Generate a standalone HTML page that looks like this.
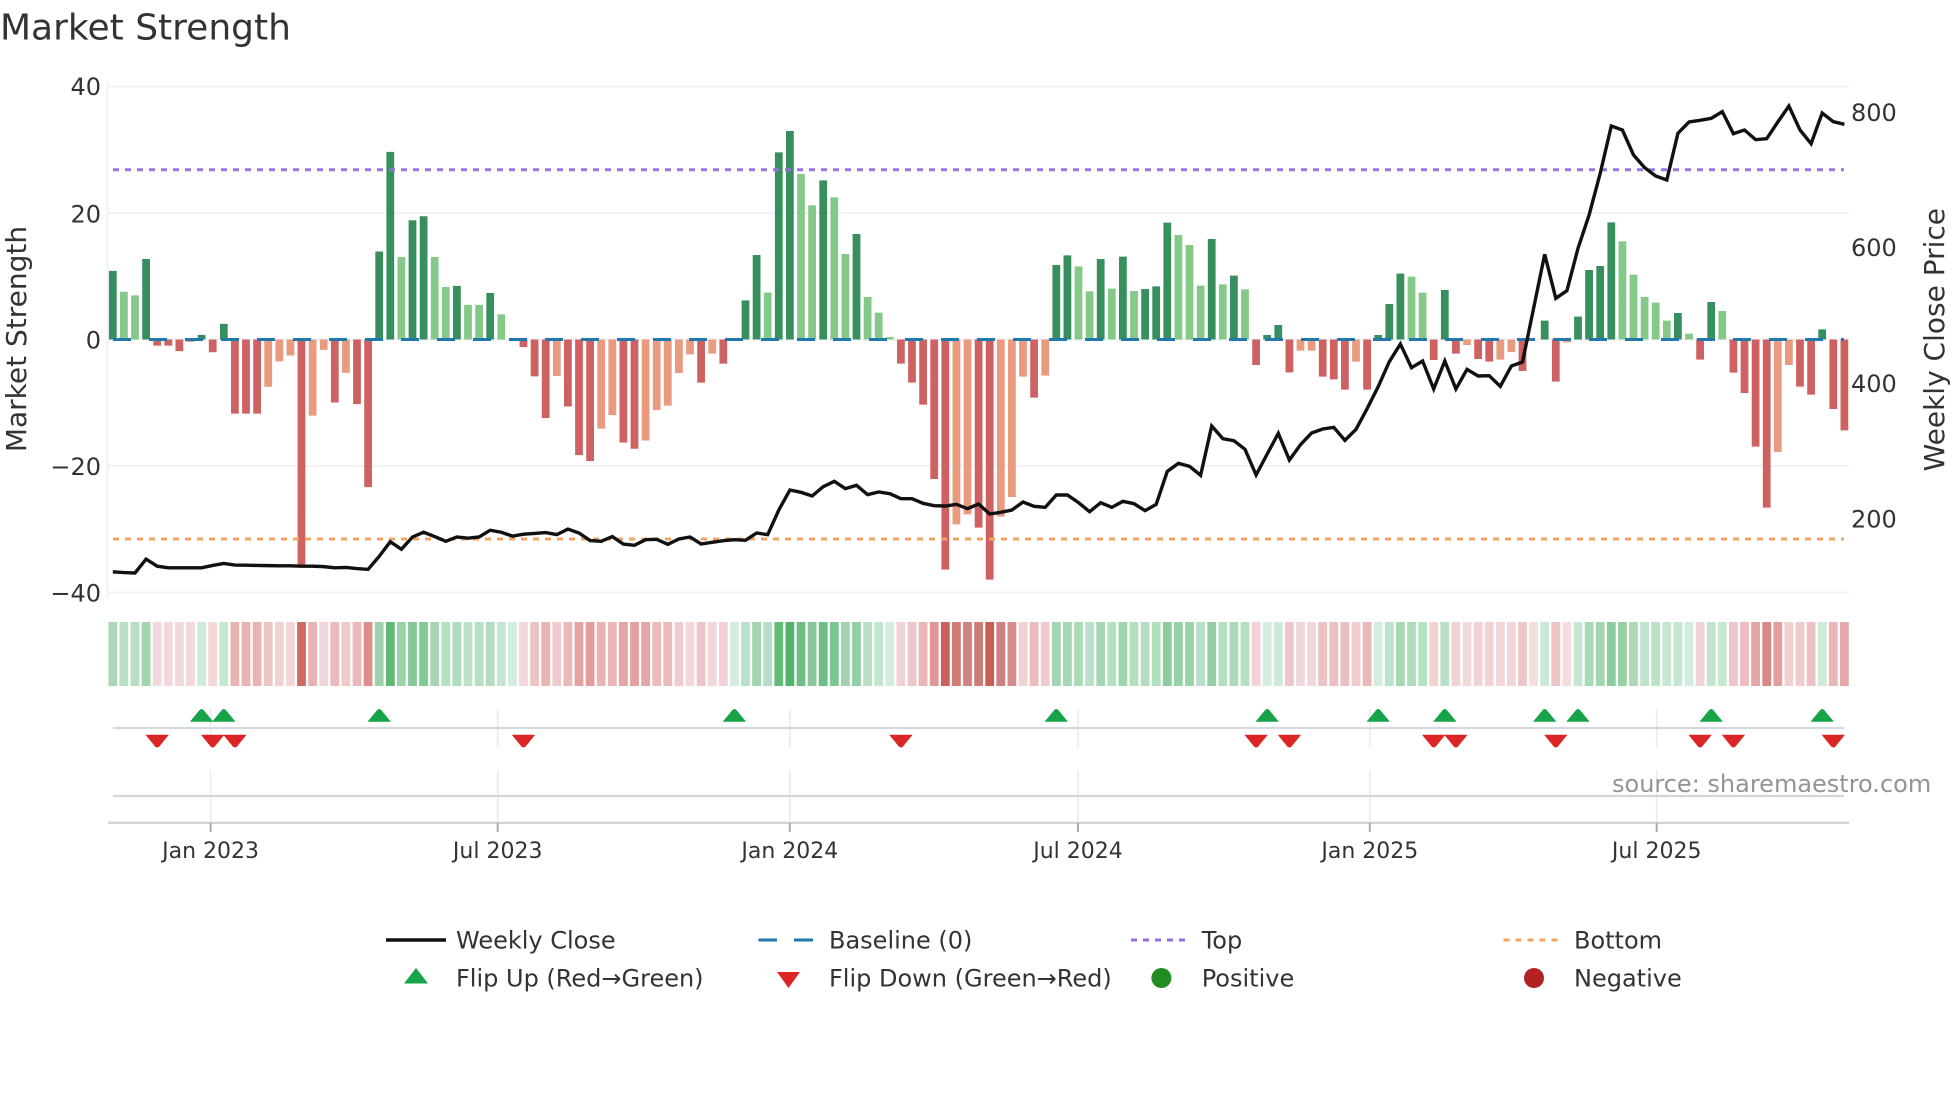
<!DOCTYPE html>
<html lang="en">
<head>
<meta charset="utf-8">
<title>Market Strength</title>
<style>
html,body{margin:0;padding:0;background:#fff;width:1960px;height:1102px;overflow:hidden}
svg{display:block;position:absolute;left:0;top:0}
text{font-family:"DejaVu Sans","Liberation Sans",sans-serif;fill:#333}
</style>
</head>
<body>
<svg width="1960" height="1102" viewBox="0 0 1960 1102" xmlns="http://www.w3.org/2000/svg">
<defs>
<path id="u" d="M-11.7 721.7L-2 710Q0 708 2 710L11.7 721.7Z" fill="#16a34a"/>
<path id="d" d="M-11.7 734.7H11.7L2 746.6Q0 748.4 -2 746.6Z" fill="#dc2626"/>
</defs>

<!-- title -->
<text x="0" y="39.5" font-size="36">Market Strength</text>

<!-- grid -->
<g stroke="#f0f2f6" stroke-width="2" fill="none">
<path d="M107 86.5H1849M107 213H1849M107 339.5H1849M107 466H1849M107 592.5H1849"/>
<path d="M107.5 81V599"/>
</g>

<!-- bars, first part -->
<g transform="translate(112.8 0) scale(11.1 .3954)" stroke-width=".7" fill="none" opacity=".96">
<path stroke="#2e8b57" d="M0 858.6V685M3 858.6V655M8 858.6V847M10 858.6V819M24 858.6V636M25 858.6V384M27 858.6V557M28 858.6V547M31 858.6V723M34 858.6V741"/>
<path stroke="#81c784" d="M1 858.6V738M2 858.6V747M26 858.6V650M29 858.6V650M30 858.6V726M32 858.6V771M33 858.6V771M35 858.6V795"/>
<path stroke="#cd5c5c" d="M4 858.6V874M5 858.6V874M6 858.6V888M9 858.6V891M11 858.6V1046M12 858.6V1046M13 858.6V1046M17 858.6V1430M20 858.6V1018M22 858.6V1022M23 858.6V1232M37 858.6V878M38 858.6V952M39 858.6V1057M41 858.6V1028M42 858.6V1151M43 858.6V1166M46 858.6V1119M47 858.6V1135"/>
<path stroke="#e9967a" d="M7 858.6V865M14 858.6V978M15 858.6V914M16 858.6V899M18 858.6V1051M19 858.6V885M21 858.6V943M40 858.6V951M44 858.6V1084M45 858.6V1050M48 858.6V1114M49 858.6V1037"/>
</g>
<!-- bars, rest -->
<g transform="translate(112.8 100) scale(11.1 .33333)" stroke-width=".7" fill="none" opacity=".96">
<path stroke="#2e8b57" d="M57 718.5V601M58 718.5V465M60 718.5V157M61 718.5V93M64 718.5V241M67 718.5V402M85 718.5V495M86 718.5V466M89 718.5V477M91 718.5V470M93 718.5V567M94 718.5V559M95 718.5V368M99 718.5V417M101 718.5V527M104 718.5V705M105 718.5V675M114 718.5V705M115 718.5V612M116 718.5V521M120 718.5V570M129 718.5V662M132 718.5V650M133 718.5V510M134 718.5V498M135 718.5V367M141 718.5V639M144 718.5V606M154 718.5V688"/>
<path stroke="#81c784" d="M59 718.5V578M62 718.5V222M63 718.5V316M65 718.5V292M66 718.5V462M68 718.5V591M69 718.5V638M70 718.5V711M87 718.5V499M88 718.5V574M90 718.5V566M92 718.5V573M96 718.5V405M97 718.5V435M98 718.5V557M100 718.5V553M102 718.5V568M117 718.5V530M118 718.5V578M136 718.5V424M137 718.5V524M138 718.5V591M139 718.5V608M140 718.5V662M142 718.5V701M145 718.5V633"/>
<path stroke="#cd5c5c" d="M53 718.5V848M55 718.5V791M71 718.5V791M72 718.5V848M73 718.5V914M74 718.5V1137M75 718.5V1409M78 718.5V1283M79 718.5V1439M83 718.5V893M103 718.5V795M106 718.5V817M109 718.5V830M110 718.5V838M111 718.5V869M113 718.5V869M119 718.5V780M121 718.5V761M123 718.5V777M124 718.5V785M127 718.5V813M130 718.5V845M143 718.5V779M146 718.5V818M147 718.5V879M148 718.5V1040M149 718.5V1223M152 718.5V860M153 718.5V884M155 718.5V927M156 718.5V991"/>
<path stroke="#e9967a" d="M50 718.5V917M51 718.5V819M52 718.5V763M54 718.5V761M76 718.5V1273M77 718.5V1243M80 718.5V1250M81 718.5V1191M82 718.5V830M84 718.5V827M107 718.5V752M108 718.5V752M112 718.5V785M122 718.5V735M125 718.5V779M126 718.5V756M131 718.5V727M150 718.5V1056M151 718.5V795"/>
</g>

<!-- reference lines -->
<path d="M113 339.5H1844" stroke="#2277ab" stroke-width="3" stroke-dasharray="18 18" fill="none"/>
<path d="M113 169.7H1844" stroke="#9370db" stroke-width="3" stroke-dasharray="6 6" fill="none" opacity=".95"/>
<path d="M113 539H1844" stroke="#f4a460" stroke-width="3" stroke-dasharray="6 6" fill="none"/>

<!-- weekly close -->
<g transform="translate(112.8 100) scale(11.1 .33333)">
<polyline vector-effect="non-scaling-stroke" fill="none" stroke="#111" stroke-width="3.4" stroke-linejoin="miter" stroke-linecap="butt" points="0,1415.3 1,1417.7 2,1418.9 3,1377.3 4,1398.7 5,1403.4 6,1403.4 7,1403.4 8,1403.4 9,1396.3 10,1390.4 11,1395.1 12,1395.7 13,1396.3 14,1396.9 15,1397.5 16,1397.5 17,1398.7 18,1398.7 19,1399.9 20,1403.4 21,1402.2 22,1405.8 23,1408.2 24,1369 25,1325.2 26,1347.7 27,1311 28,1296.7 29,1309.7 30,1324 31,1311 32,1314.5 33,1311 34,1290.7 35,1296.7 36,1308.5 37,1302.6 38,1300.2 39,1297.8 40,1303.8 41,1287.2 42,1299 43,1321.6 44,1324 45,1309.7 46,1332.3 47,1335.8 48,1319.2 49,1318 50,1333 51,1317 52,1311 53,1332 54,1327 55,1322 56,1319 57,1321 58,1299 59,1304 60,1230 61,1170 62,1177 63,1188 64,1160 65,1144 66,1166 67,1156 68,1184 69,1176 70,1181 71,1196 72,1196 73,1210 74,1217 75,1218 76,1213 77,1226 78,1212 79,1242 80,1237 81,1230 82,1206 83,1219 84,1222 85,1185 86,1185 87,1208 88,1235 89,1208 90,1222 91,1204 92,1211 93,1232 94,1213 95,1114 96,1090 97,1099 98,1126 99,978 100,1016 101,1022 102,1048 103,1125 104,1062 105,1000 106,1080 107,1034 108,999 109,987 110,982 111,1021 112,988 113,926 114,860 115,785 116,732 117,803 118,783 119,867 120,783 121,867 122,808 123,828 124,827 125,859 126,798 127,786 128,625 129,463 130,595 131,572 132,445 133,345 134,220 135,78 136,90 137,165 138,203 139,228 140,240 141,100 142,66 143,61 144,55 145,35 146,101 147,90 148,119 149,116 150,66 151,18 152,90 153,131 154,39 155,65 156,73"/>
</g>

<!-- heat strip -->
<g transform="translate(112.8 0) scale(11.1 1)" stroke-width=".793" fill="none">
<path stroke="#aad8b6" d="M0 622V686"/><path stroke="#b8dfc5" d="M1 622V686"/><path stroke="#b8dfc5" d="M2 622V686"/><path stroke="#a2d4ae" d="M3 622V686"/><path stroke="#f1d9dd" d="M4 622V686"/><path stroke="#f2d8dc" d="M5 622V686"/><path stroke="#f0d8da" d="M6 622V686"/><path stroke="#f2d8dc" d="M7 622V686"/><path stroke="#cdeadb" d="M8 622V686"/><path stroke="#f2d6d8" d="M9 622V686"/>
<path stroke="#c5e7d0" d="M10 622V686"/><path stroke="#e9b3b3" d="M11 622V686"/><path stroke="#e9b3b3" d="M12 622V686"/><path stroke="#e8b3b1" d="M13 622V686"/><path stroke="#ecc4c4" d="M14 622V686"/><path stroke="#f0d2d2" d="M15 622V686"/><path stroke="#f3d6d8" d="M16 622V686"/><path stroke="#cc6b62" d="M17 622V686"/><path stroke="#e9b3b3" d="M18 622V686"/><path stroke="#f0d6d8" d="M19 622V686"/>
<path stroke="#edb9ba" d="M20 622V686"/><path stroke="#efcacb" d="M21 622V686"/><path stroke="#ecb9ba" d="M22 622V686"/><path stroke="#de8d8b" d="M23 622V686"/><path stroke="#9ed1a9" d="M24 622V686"/><path stroke="#5fb972" d="M25 622V686"/><path stroke="#9cd3a6" d="M26 622V686"/><path stroke="#85ca95" d="M27 622V686"/><path stroke="#83c994" d="M28 622V686"/><path stroke="#a5d6b1" d="M29 622V686"/>
<path stroke="#b5dfc3" d="M30 622V686"/><path stroke="#aedcbc" d="M31 622V686"/><path stroke="#bce3ca" d="M32 622V686"/><path stroke="#b8dfc5" d="M33 622V686"/><path stroke="#b3dcc2" d="M34 622V686"/><path stroke="#c6e6d5" d="M35 622V686"/><path stroke="#d3ece0" d="M36 622V686"/><path stroke="#f2d8dd" d="M37 622V686"/><path stroke="#edc4c4" d="M38 622V686"/><path stroke="#e9b3b0" d="M39 622V686"/>
<path stroke="#efcbd0" d="M40 622V686"/><path stroke="#ecb9b8" d="M41 622V686"/><path stroke="#e3a3a5" d="M42 622V686"/><path stroke="#e09d9b" d="M43 622V686"/><path stroke="#e9b3b3" d="M44 622V686"/><path stroke="#ecb5b5" d="M45 622V686"/><path stroke="#e4a5a5" d="M46 622V686"/><path stroke="#e3a2a0" d="M47 622V686"/><path stroke="#e3a5a5" d="M48 622V686"/><path stroke="#ecbcbc" d="M49 622V686"/>
<path stroke="#ebbcbd" d="M50 622V686"/><path stroke="#efcbd0" d="M51 622V686"/><path stroke="#f2d8da" d="M52 622V686"/><path stroke="#eec6c8" d="M53 622V686"/><path stroke="#f3d6d9" d="M54 622V686"/><path stroke="#f2d2d8" d="M55 622V686"/><path stroke="#d2ecdf" d="M56 622V686"/><path stroke="#b8e1c7" d="M57 622V686"/><path stroke="#a1d5af" d="M58 622V686"/><path stroke="#b5ddca" d="M59 622V686"/>
<path stroke="#62bc78" d="M60 622V686"/><path stroke="#53b26c" d="M61 622V686"/><path stroke="#6fbe86" d="M62 622V686"/><path stroke="#88c89b" d="M63 622V686"/><path stroke="#6fbd86" d="M64 622V686"/><path stroke="#78c88e" d="M65 622V686"/><path stroke="#a0d3ae" d="M66 622V686"/><path stroke="#93cfa4" d="M67 622V686"/><path stroke="#b9e0c6" d="M68 622V686"/><path stroke="#c2e6cf" d="M69 622V686"/>
<path stroke="#d3ece0" d="M70 622V686"/><path stroke="#f0d2d8" d="M71 622V686"/><path stroke="#edc6cc" d="M72 622V686"/><path stroke="#ebb5b8" d="M73 622V686"/><path stroke="#de9895" d="M74 622V686"/><path stroke="#c9625e" d="M75 622V686"/><path stroke="#d27c78" d="M76 622V686"/><path stroke="#d08380" d="M77 622V686"/><path stroke="#d07c78" d="M78 622V686"/><path stroke="#c85f55" d="M79 622V686"/>
<path stroke="#cf7f7f" d="M80 622V686"/><path stroke="#d48c8b" d="M81 622V686"/><path stroke="#f0d2d4" d="M82 622V686"/><path stroke="#ecbcbc" d="M83 622V686"/><path stroke="#efc9cd" d="M84 622V686"/><path stroke="#a3d6b1" d="M85 622V686"/><path stroke="#a3d6b1" d="M86 622V686"/><path stroke="#aadcb7" d="M87 622V686"/><path stroke="#bbe0c9" d="M88 622V686"/><path stroke="#a4d6b3" d="M89 622V686"/>
<path stroke="#b4e0c0" d="M90 622V686"/><path stroke="#9fd5ad" d="M91 622V686"/><path stroke="#b4e0c0" d="M92 622V686"/><path stroke="#b6dcc4" d="M93 622V686"/><path stroke="#b0dfbc" d="M94 622V686"/><path stroke="#8ccca0" d="M95 622V686"/><path stroke="#95d2a5" d="M96 622V686"/><path stroke="#98d4a6" d="M97 622V686"/><path stroke="#b9dec8" d="M98 622V686"/><path stroke="#94cfa3" d="M99 622V686"/>
<path stroke="#b4e0c0" d="M100 622V686"/><path stroke="#acd9b9" d="M101 622V686"/><path stroke="#b4e0c0" d="M102 622V686"/><path stroke="#f1d2d8" d="M103 622V686"/><path stroke="#d3ece0" d="M104 622V686"/><path stroke="#cdeadb" d="M105 622V686"/><path stroke="#eec7cc" d="M106 622V686"/><path stroke="#f1d6dc" d="M107 622V686"/><path stroke="#f1d6da" d="M108 622V686"/><path stroke="#edc4c4" d="M109 622V686"/>
<path stroke="#ecc0c2" d="M110 622V686"/><path stroke="#eabec2" d="M111 622V686"/><path stroke="#f1cccc" d="M112 622V686"/><path stroke="#e9b9ba" d="M113 622V686"/><path stroke="#d5ece0" d="M114 622V686"/><path stroke="#bce2ca" d="M115 622V686"/><path stroke="#a8d9b5" d="M116 622V686"/><path stroke="#b0dcbb" d="M117 622V686"/><path stroke="#b5e2bf" d="M118 622V686"/><path stroke="#f1d0d0" d="M119 622V686"/>
<path stroke="#b7e0c6" d="M120 622V686"/><path stroke="#f2d2d4" d="M121 622V686"/><path stroke="#f2dadc" d="M122 622V686"/><path stroke="#f2d4d6" d="M123 622V686"/><path stroke="#f0d2d2" d="M124 622V686"/><path stroke="#f2d6d8" d="M125 622V686"/><path stroke="#f1d6d8" d="M126 622V686"/><path stroke="#eec6c8" d="M127 622V686"/><path stroke="#f3dfe0" d="M128 622V686"/><path stroke="#c9e8d7" d="M129 622V686"/>
<path stroke="#ecc4c6" d="M130 622V686"/><path stroke="#f4dce0" d="M131 622V686"/><path stroke="#c5e6d0" d="M132 622V686"/><path stroke="#a9d9b5" d="M133 622V686"/><path stroke="#a3d6ae" d="M134 622V686"/><path stroke="#8ccd9e" d="M135 622V686"/><path stroke="#97d2a5" d="M136 622V686"/><path stroke="#acdab6" d="M137 622V686"/><path stroke="#bfe3cd" d="M138 622V686"/><path stroke="#bce2c6" d="M139 622V686"/>
<path stroke="#c6e7d3" d="M140 622V686"/><path stroke="#c6e6d3" d="M141 622V686"/><path stroke="#d2ecdf" d="M142 622V686"/><path stroke="#f1d2d8" d="M143 622V686"/><path stroke="#c2e3cd" d="M144 622V686"/><path stroke="#c5e7d0" d="M145 622V686"/><path stroke="#eec4cc" d="M146 622V686"/><path stroke="#ecbcc0" d="M147 622V686"/><path stroke="#e2a6a6" d="M148 622V686"/><path stroke="#d88886" d="M149 622V686"/>
<path stroke="#e3a09a" d="M150 622V686"/><path stroke="#f1d0d0" d="M151 622V686"/><path stroke="#efcccc" d="M152 622V686"/><path stroke="#edc0c4" d="M153 622V686"/><path stroke="#cdeadb" d="M154 622V686"/><path stroke="#eab6b6" d="M155 622V686"/><path stroke="#e3a8aa" d="M156 622V686"/>
</g>

<!-- lower panels grid -->
<g stroke="#e9ebef" stroke-width="1.6" fill="none">
<path d="M210.6 709V748M497.7 709V748M789.8 709V748M1078 709V748M1369.8 709V748M1656.7 709V748"/>
<path d="M210.6 770V823M497.7 770V823M789.8 770V823M1078 770V823M1369.8 770V823M1656.7 770V823"/>
</g>
<path d="M113 728H1844" stroke="#d6d9de" stroke-width="2.2" fill="none"/>
<path d="M113 796H1844" stroke="#d2d4d7" stroke-width="2.2" fill="none"/>
<path d="M108 822.8H1849" stroke="#cfcfcf" stroke-width="2.2" fill="none"/>
<path d="M210.6 823V832M497.7 823V832M789.8 823V832M1078 823V832M1369.8 823V832M1656.7 823V832" stroke="#aaa" stroke-width="2" fill="none"/>

<!-- flips -->
<use href="#u" x="201.6"/><use href="#u" x="223.8"/><use href="#u" x="379.2"/><use href="#u" x="734.4"/><use href="#u" x="1056.3"/><use href="#u" x="1267.2"/><use href="#u" x="1378.2"/><use href="#u" x="1444.8"/><use href="#u" x="1544.7"/><use href="#u" x="1578"/><use href="#u" x="1711.2"/><use href="#u" x="1822.2"/>
<use href="#d" x="157.2"/><use href="#d" x="212.7"/><use href="#d" x="234.9"/><use href="#d" x="523.5"/><use href="#d" x="900.9"/><use href="#d" x="1256.1"/><use href="#d" x="1289.4"/><use href="#d" x="1433.7"/><use href="#d" x="1455.9"/><use href="#d" x="1555.8"/><use href="#d" x="1700.1"/><use href="#d" x="1733.4"/><use href="#d" x="1833.3"/>

<!-- axis labels -->
<g font-size="24" text-anchor="end">
<text x="101" y="94.8">40</text>
<text x="101" y="222.6">20</text>
<text x="101" y="348.5">0</text>
<text x="101" y="475.2">−20</text>
<text x="101" y="601.5">−40</text>
</g>
<g font-size="24">
<text x="1851" y="121">800</text>
<text x="1851" y="256">600</text>
<text x="1851" y="392">400</text>
<text x="1851" y="527.7">200</text>
</g>
<text transform="translate(26 339) rotate(-90)" font-size="28" text-anchor="middle">Market Strength</text>
<text transform="translate(1944 339.7) rotate(-90)" font-size="28" text-anchor="middle">Weekly Close Price</text>
<g font-size="22" text-anchor="middle">
<text x="210.6" y="858">Jan 2023</text>
<text x="497.7" y="858">Jul 2023</text>
<text x="789.8" y="858">Jan 2024</text>
<text x="1078" y="858">Jul 2024</text>
<text x="1369.8" y="858">Jan 2025</text>
<text x="1656.7" y="858">Jul 2025</text>
</g>

<!-- source -->
<text x="1612" y="792" font-size="24" style="fill:#949494">source: sharemaestro.com</text>

<!-- legend -->
<path d="M386 940H446" stroke="#111" stroke-width="3.4" fill="none"/>
<path d="M758.4 940H777M794 940H813" stroke="#2277ab" stroke-width="3" fill="none"/>
<path d="M1131 940H1186" stroke="#9370db" stroke-width="3" stroke-dasharray="6 6" fill="none"/>
<path d="M1503.5 940H1558.6" stroke="#f4a460" stroke-width="3" stroke-dasharray="6 6" fill="none"/>
<path d="M404 983.5L416 968L428 983.5Z" fill="#16a34a"/>
<path d="M777 972H800L788.5 988Z" fill="#dc2626"/>
<circle cx="1161.4" cy="978" r="10" fill="#228b22"/>
<circle cx="1534" cy="978" r="10" fill="#b22222"/>
<g font-size="24">
<text x="456" y="948.3">Weekly Close</text>
<text x="829" y="948.3">Baseline (0)</text>
<text x="1201.7" y="948.3">Top</text>
<text x="1574" y="948.3">Bottom</text>
<text x="456" y="986.3">Flip Up (Red→Green)</text>
<text x="829" y="986.3">Flip Down (Green→Red)</text>
<text x="1201.7" y="986.3">Positive</text>
<text x="1574" y="986.3">Negative</text>
</g>
</svg>
</body>
</html>
